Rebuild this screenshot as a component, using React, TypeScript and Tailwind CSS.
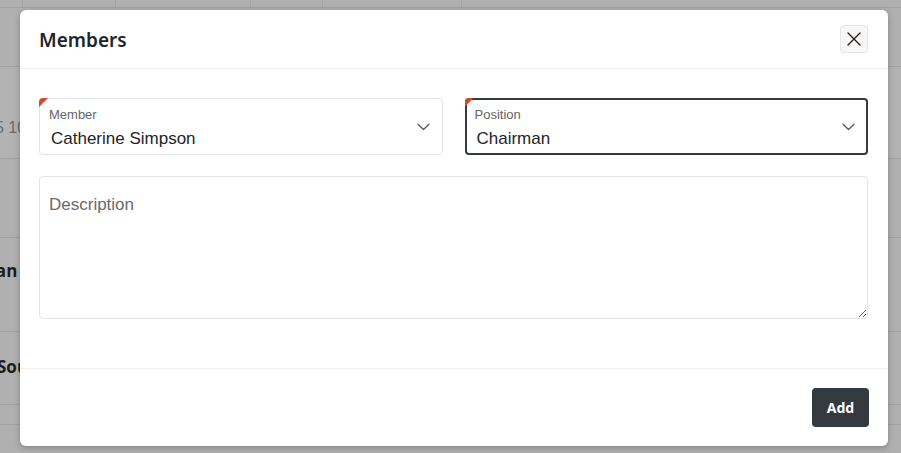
import React from "react";

const cols = [23, 93, 135, 72, 139];

function Corner() {
  return <span className="absolute left-0 top-0 h-[9px] w-[9px] rounded-tl-[4px] bg-[#d9472b] [clip-path:polygon(0_0,100%_0,0_100%)]" />;
}

function Chevron() {
  return (
    <svg width="13" height="8" viewBox="0 0 13 8" fill="none" className="shrink-0">
      <path d="M1 1.2 6.5 6.5 12 1.2" stroke="#5a5a5a" strokeWidth="1.3" strokeLinecap="round" strokeLinejoin="round" />
    </svg>
  );
}

function SelectField({ label, value, active }: { label: string; value: string; active?: boolean }) {
  return (
    <div className="relative flex-1">
      <div
        className={
          active
            ? "flex h-[57px] items-center rounded-[4px] border-2 border-[#343a40] pl-[8px] pr-[11px]"
            : "flex h-[57px] items-center rounded-[4px] border border-[#e2e4e6] pl-[9px] pr-[12px]"
        }
      >
        <div className="flex flex-1 flex-col pt-[2px]">
          <span className="text-[13px] leading-[16px] text-[#666]">{label}</span>
          <span className="mt-[6px] pl-[2px] text-[17px] leading-[20px] text-[#212529]">{value}</span>
        </div>
        <Chevron />
      </div>
      <Corner />
    </div>
  );
}

export default function App() {
  return (
    <div className="relative h-[453px] w-[901px] overflow-hidden bg-[#b0b0b0] font-['Liberation_Sans',Arial,sans-serif]">
      {/* table behind the overlay */}
      <div className="flex flex-col">
        <div className="flex h-[8px] border-b border-[#a2a2a2]">
          {cols.map((w, i) => (
            <div key={i} style={{ width: w }} className="border-r border-[#a2a2a2]" />
          ))}
        </div>
        <div className="h-[59px] border-b border-[#a2a2a2]" />
        <div className="flex h-[92px] items-start border-b border-[#a2a2a2] bg-[#b3b3b3] pt-[51px]">
          <span className="ml-[-14px] text-[16px] leading-[20px] text-[#6c6c6c]">05 10</span>
        </div>
        <div className="h-[79px] border-b border-[#a2a2a2]" />
        <div className="flex h-[94px] items-start border-b border-[#a2a2a2] pt-[20px]">
          <span className="ml-[-20px] font-['Open_Sans',sans-serif] text-[17px] font-bold text-[#1c1c1c]">Plan</span>
        </div>
        <div className="flex h-[73px] items-center border-b border-[#a2a2a2]">
          <span className="ml-[-3px] mt-[-3px] font-['Open_Sans',sans-serif] text-[17px] font-bold text-[#1c1c1c]">Sou</span>
        </div>
        <div className="h-[20px] border-b border-[#a2a2a2]" />
        <div className="h-[28px]" />
      </div>

      {/* modal */}
      <div className="absolute left-[20px] top-[10px] flex h-[436px] w-[868px] flex-col rounded-[6px] bg-white shadow-[0_2px_6px_rgba(0,0,0,0.25)]">
        <div className="flex h-[59px] items-center justify-between border-b border-[#f0f0f0] pl-[19px] pr-[20px]">
          <h2 className="mt-[2px] font-['Noto_Sans',sans-serif] text-[19px] font-semibold text-[#212529]">Members</h2>
          <button className="flex h-[28px] w-[28px] items-center justify-center rounded-[4px] border border-[#e4e4e4] bg-[#f8f7f5]">
            <svg width="14" height="14" viewBox="0 0 14 14" fill="none">
              <path d="M1 1 13 13M13 1 1 13" stroke="#222" strokeWidth="1.4" strokeLinecap="round" />
            </svg>
          </button>
        </div>

        <div className="flex flex-1 flex-col gap-[21px] px-[19px] pr-[20px] pt-[29px]">
          <div className="flex gap-[22px]">
            <SelectField label="Member" value="Catherine Simpson" />
            <SelectField label="Position" value="Chairman" active />
          </div>
          <textarea
            placeholder="Description"
            className="h-[143px] w-full rounded-[4px] border border-[#e2e4e6] px-[9px] pt-[15px] text-[17px] leading-[1.5] text-[#212529] outline-none placeholder:text-[#6a6a6a]"
          />
        </div>

        <div className="flex h-[78px] items-center justify-end border-t border-[#f0f0f0] pr-[19px]">
          <button className="h-[39px] w-[57px] rounded-[4px] bg-[#343a40] font-['Noto_Sans',sans-serif] text-[14px] font-bold text-white">
            Add
          </button>
        </div>
      </div>
    </div>
  );
}
